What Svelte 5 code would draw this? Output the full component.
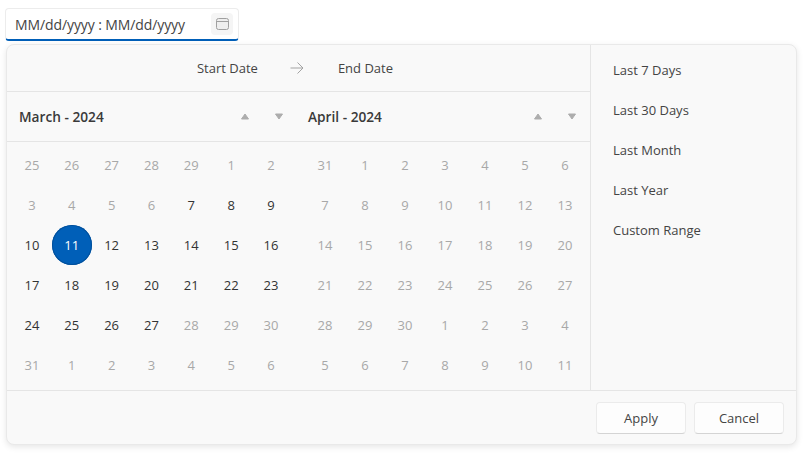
<script>
  const march = [
    [25,0],[26,0],[27,0],[28,0],[29,0],[1,0],[2,0],
    [3,0],[4,0],[5,0],[6,0],[7,1],[8,1],[9,1],
    [10,1],[11,2],[12,1],[13,1],[14,1],[15,1],[16,1],
    [17,1],[18,1],[19,1],[20,1],[21,1],[22,1],[23,1],
    [24,1],[25,1],[26,1],[27,1],[28,0],[29,0],[30,0],
    [31,0],[1,0],[2,0],[3,0],[4,0],[5,0],[6,0]
  ];
  const april = [31,1,2,3,4,5,6,7,8,9,10,11,12,13,14,15,16,17,18,19,20,21,22,23,24,25,26,27,28,29,30,1,2,3,4,5,6,7,8,9,10,11]
    .map((d) => [d, 0]);
  const months = [
    { title: 'March - 2024', days: march, cls: 'first' },
    { title: 'April - 2024', days: april, cls: 'second' }
  ];
  const presets = ['Last 7 Days', 'Last 30 Days', 'Last Month', 'Last Year', 'Custom Range'];
</script>

<div class="page">
  <div class="input">
    <span class="value">MM/dd/yyyy : MM/dd/yyyy</span>
    <span class="icon-btn">
      <svg width="14" height="14" viewBox="0 0 14 14" fill="none" stroke="#a0a0a0" stroke-width="1">
        <rect x="1.5" y="1.5" width="12" height="11" rx="2" fill="#eeeeee" />
        <path d="M1.500 4.500h12" />
      </svg>
    </span>
  </div>

  <div class="popup">
    <div class="body">
      <div class="main">
        <div class="range">
          <span>Start Date</span>
          <svg width="16" height="14" viewBox="0 0 16 14" fill="none" stroke="#a3a3a3" stroke-width="1">
            <path d="M1.500 7h12.500M8.500 1.500 14 7l-5.500 5.500" />
          </svg>
          <span>End Date</span>
        </div>
        <div class="months">
          {#each months as m}
            <div class="month {m.cls}">
              <div class="month-head">
                <span class="title">{m.title}</span>
                <span class="arrows">
                  <svg width="10" height="7" viewBox="0 0 10 7"><path d="M5 1 8.500 6h-7z" fill="#adadad" stroke="#adadad" stroke-linejoin="round" /></svg>
                  <svg width="10" height="7" viewBox="0 0 10 7"><path d="M5 6 1.500 1h7z" fill="#adadad" stroke="#adadad" stroke-linejoin="round" /></svg>
                </span>
              </div>
              <div class="grid">
                {#each m.days as [d, s]}
                  <span class="day" class:on={s === 1} class:sel={s === 2}>{d}</span>
                {/each}
              </div>
            </div>
          {/each}
        </div>
      </div>
      <div class="side">
        {#each presets as p}
          <div class="preset">{p}</div>
        {/each}
      </div>
    </div>
    <div class="footer">
      <button>Apply</button>
      <button>Cancel</button>
    </div>
  </div>
</div>

<style>
  :global(body) {
    margin: 0;
    background: #fff;
  }
  .page {
    width: 809px;
    height: 454px;
    padding: 8px 0 0 5px;
    box-sizing: border-box;
    font-family: "Open Sans", "Noto Sans", sans-serif;
    font-size: 13px;
    color: #323130;
    overflow: hidden;
  }
  .input {
    width: 234px;
    height: 33px;
    box-sizing: border-box;
    display: flex;
    align-items: center;
    justify-content: space-between;
    padding: 0 5px 0 9px;
    border: 1px solid #ececec;
    border-bottom: 2px solid #005fb8;
    border-radius: 4px;
    background: #fff;
  }
  .value {
    font-size: 14px;
    letter-spacing: -0.1px;
    color: #444;
  }
  .icon-btn {
    width: 22px;
    height: 22px;
    border-radius: 4px;
    background: #f5f5f5;
    display: flex;
    align-items: center;
    justify-content: center;
  }
  .popup {
    width: 791px;
    height: 401px;
    margin: 3px 0 0 1px;
    box-sizing: border-box;
    background: #f9f9f9;
    border: 1px solid #e9e9e9;
    border-radius: 8px;
    box-shadow: 0 2px 6px rgba(0, 0, 0, 0.1);
    display: flex;
    flex-direction: column;
  }
  .body {
    height: 345px;
    display: flex;
    border-bottom: 1px solid #e5e5e5;
  }
  .main {
    width: 583px;
  }
  .range {
    height: 47px;
    box-sizing: border-box;
    border-bottom: 1px solid #e5e5e5;
    display: flex;
    align-items: center;
    justify-content: center;
    gap: 31px;
    color: #444;
    padding-right: 7px;
  }
  .range span:last-child {
    margin-left: 2px;
  }
  .months {
    display: flex;
  }
  .month.first {
    width: 289px;
  }
  .month.second {
    width: 294px;
  }
  .month-head {
    height: 50px;
    box-sizing: border-box;
    border-bottom: 1px solid #e5e5e5;
    display: flex;
    align-items: center;
    justify-content: space-between;
    padding: 0 12px;
  }
  .second .month-head {
    padding-right: 13px;
  }
  .title {
    font-size: 13.7px;
    font-weight: 600;
    color: #3a3a3a;
  }
  .arrows {
    display: flex;
    gap: 24px;
  }
  .grid {
    display: grid;
    grid-template-columns: repeat(7, 39.85px);
    grid-auto-rows: 40px;
    padding: 3px 0 0 5px;
  }
  .second .grid {
    grid-template-columns: repeat(7, 40px);
    padding-left: 9px;
  }
  .day {
    display: flex;
    align-items: center;
    justify-content: center;
    color: #a8a8a8;
    border-radius: 50%;
  }
  .day.on {
    color: #333;
  }
  .day.sel {
    color: #fff;
    background: #005fb8;
    box-shadow: inset 0 0 0 1px #00509c;
  }
  .side {
    flex: 1;
    border-left: 1px solid #e5e5e5;
    padding-top: 5px;
  }
  .preset {
    height: 40px;
    display: flex;
    align-items: center;
    padding-left: 22px;
    color: #444;
  }
  .footer {
    flex: 1;
    display: flex;
    justify-content: flex-end;
    align-items: center;
    gap: 8px;
    padding: 0 12px 0 0;
  }
  button {
    width: 90px;
    height: 32px;
    border: 1px solid #ebebeb;
    border-bottom-color: #d4d4d4;
    border-radius: 4px;
    background: #fdfdfd;
    font: inherit;
    color: #444;
    padding: 0;
  }
</style>
